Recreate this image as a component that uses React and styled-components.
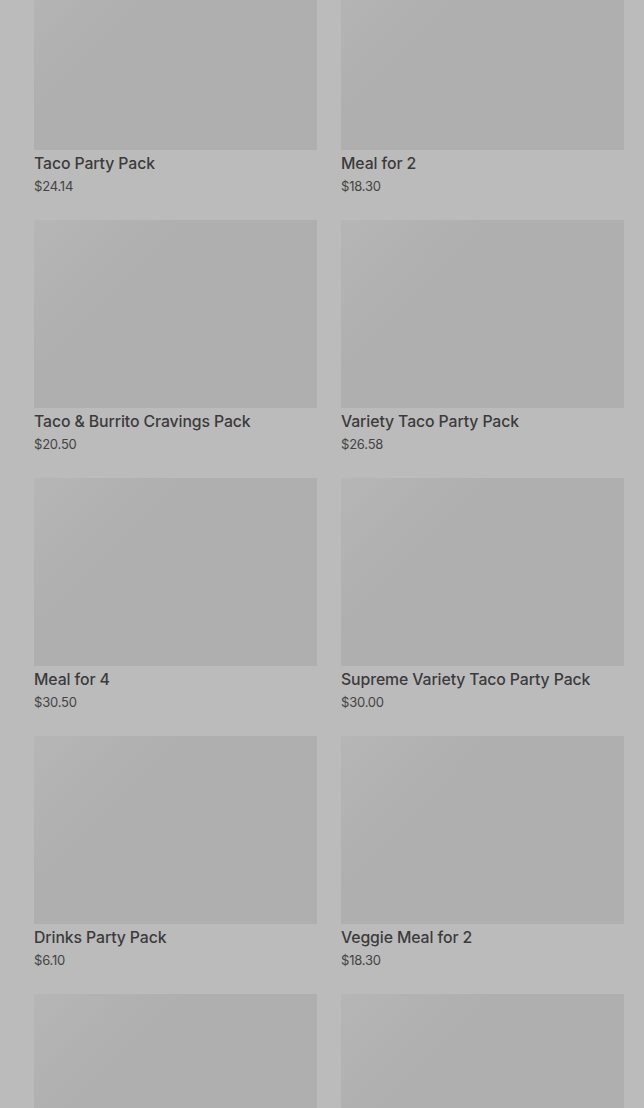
import React from "react";
import styled, { createGlobalStyle } from "styled-components";

const products = [
  { name: "Taco Party Pack", price: "$24.14" },
  { name: "Meal for 2", price: "$18.30" },
  { name: "Taco & Burrito Cravings Pack", price: "$20.50" },
  { name: "Variety Taco Party Pack", price: "$26.58" },
  { name: "Meal for 4", price: "$30.50" },
  { name: "Supreme Variety Taco Party Pack", price: "$30.00" },
  { name: "Drinks Party Pack", price: "$6.10" },
  { name: "Veggie Meal for 2", price: "$18.30" },
  // still loading, below the fold
  {},
  {},
];

const GlobalStyle = createGlobalStyle`
  html, body {
    margin: 0;
    padding: 0;
    background: #bbbbbb;
    overflow: hidden;
    height: 100%;
  }
  body {
    font-family: Inter, "Noto Sans", "Liberation Sans", sans-serif;
  }
`;

const Page = styled.main`
  height: 100vh;
  overflow: hidden;
  background: #bbbbbb;
  padding: 0 20px 0 34px;
  box-sizing: border-box;
`;

const Grid = styled.div`
  display: grid;
  grid-template-columns: repeat(2, 283px);
  column-gap: 24px;
  row-gap: 24px;
  margin-top: -38px;
`;

const Card = styled.article`
  display: flex;
  flex-direction: column;
`;

const Thumb = styled.div`
  height: 188px;
  background: linear-gradient(
    135deg,
    #b6b6b6 0%,
    #b2b2b2 18%,
    #afafaf 32%,
    #afafaf 100%
  );
`;

const Name = styled.h3`
  margin: 3px 0 0;
  font-size: 15.8px;
  line-height: 22px;
  font-weight: 500;
  color: #3b3b3b;
  letter-spacing: -0.1px;
`;

const Price = styled.span`
  margin-top: 1px;
  font-size: 13px;
  line-height: 20px;
  color: #444444;
  letter-spacing: -0.2px;
`;

export default function App() {
  return (
    <>
      <GlobalStyle />
      <Page>
        <Grid>
          {products.map((p, i) => (
            <Card key={i}>
              <Thumb />
              {p.name && <Name>{p.name}</Name>}
              {p.price && <Price>{p.price}</Price>}
            </Card>
          ))}
        </Grid>
      </Page>
    </>
  );
}
